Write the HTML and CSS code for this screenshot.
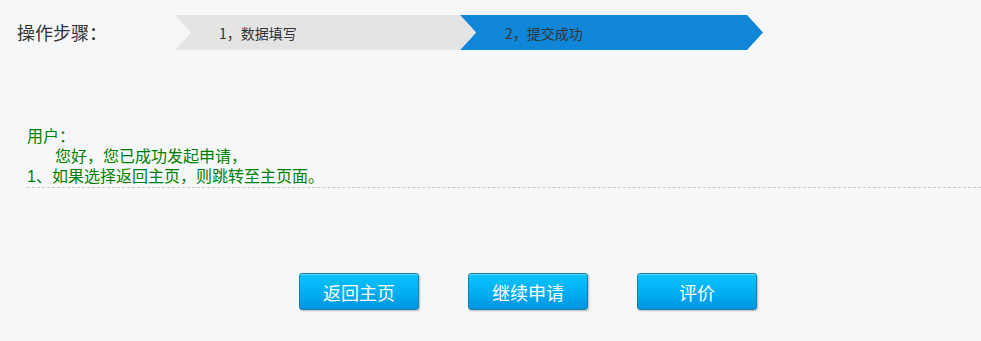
FILE: index.html
```html
<!DOCTYPE html>
<html lang="zh-CN">
<head>
<meta charset="utf-8">
<title>提交成功</title>
<link rel="stylesheet" href="styles.css">
</head>
<body>
<div class="page">
  <div class="steps-row">
    <div class="steps-label">操作步骤：</div>
    <div class="steps">
      <div class="step step-done"><span>1，数据填写</span></div>
      <div class="step step-active"><span>2，提交成功</span></div>
    </div>
  </div>
  <div class="message">
    <p class="line">用户：</p>
    <p class="line indent">您好，您已成功发起申请，</p>
    <p class="line last">1、如果选择返回主页，则跳转至主页面。</p>
  </div>
  <div class="actions">
    <button class="btn">返回主页</button>
    <button class="btn">继续申请</button>
    <button class="btn">评价</button>
  </div>
</div>
</body>
</html>
```

FILE: styles.css
```css
html, body {
  margin: 0;
  padding: 0;
  background: #f6f7f9;
  font-family: "Noto Sans CJK SC", "Noto Sans", sans-serif;
}
.page {
  width: 981px;
  height: 341px;
  overflow: hidden;
}
.steps-row {
  display: flex;
  align-items: center;
  margin-top: 15px;
  height: 35px;
}
.steps-label {
  width: 158px;
  padding-left: 17px;
  font-size: 18px;
  color: #333;
  line-height: 35px;
}
.steps {
  display: flex;
  height: 35px;
}
.step {
  height: 35px;
  display: flex;
  align-items: center;
  font-size: 14px;
  color: #333;
}
.step-done {
  width: 301px;
  background: #e4e4e4;
  clip-path: polygon(0 0, 285px 0, 301px 50%, 285px 100%, 0 100%, 16px 50%);
  padding-left: 44px;
  box-sizing: border-box;
  position: relative;
  z-index: 1;
}
.step-active {
  width: 303px;
  margin-left: -16px;
  background: #1086d8;
  clip-path: polygon(0 0, 287px 0, 303px 50%, 287px 100%, 0 100%, 16px 50%);
  padding-left: 45px;
  box-sizing: border-box;
}
.message {
  margin: 77px 0 0 27px;
  border-bottom: 1px dashed #c8c8c8;
  color: #008000;
  font-family: "Liberation Sans", "Noto Sans CJK SC", sans-serif;
  font-size: 16px;
}
.line {
  margin: 0;
  height: 20px;
  line-height: 20px;
}
.indent {
  padding-left: 28px;
}
.actions {
  display: flex;
  gap: 49px;
  padding-left: 299px;
  margin-top: 85px;
}
.btn {
  width: 120px;
  height: 37px;
  border: 1px solid #1580a8;
  border-radius: 3px;
  background: linear-gradient(#0cc4ff 0%, #00b0f2 50%, #0094e0 100%);
  box-shadow: 1px 1px 2px rgba(0,0,0,0.25), inset 0 1px 0 rgba(255,255,255,0.35);
  color: #fff;
  font-family: "Noto Sans CJK SC", "Noto Sans", sans-serif;
  font-size: 18px;
  padding: 0;
  cursor: pointer;
}
```
